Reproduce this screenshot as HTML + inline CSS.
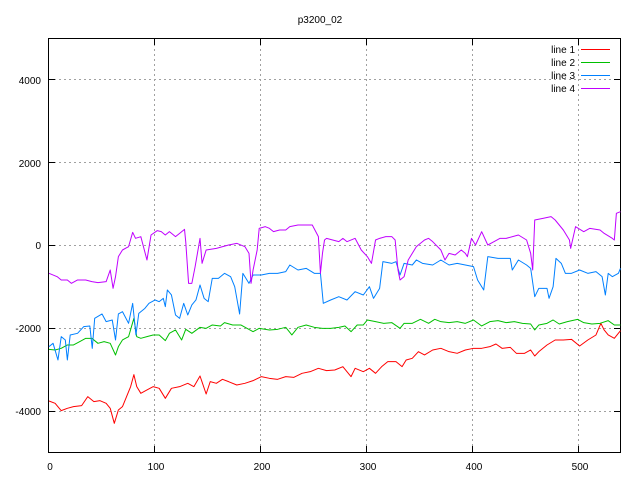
<!DOCTYPE html>
<html><head><meta charset="utf-8"><style>
html,body{margin:0;padding:0;background:#fff}
svg{display:block}
text{font-family:"Liberation Sans",sans-serif;font-size:10px;fill:#000}
</style></head><body>
<svg width="640" height="480" viewBox="0 0 640 480" xmlns="http://www.w3.org/2000/svg">
<g stroke="#a0a0a0" stroke-width="1" stroke-dasharray="2,3" fill="none" shape-rendering="crispEdges">
<line x1="154.5" y1="39" x2="154.5" y2="452"/><line x1="260.5" y1="39" x2="260.5" y2="452"/>
<line x1="366.5" y1="39" x2="366.5" y2="452"/><line x1="472.5" y1="39" x2="472.5" y2="452"/>
<line x1="578.5" y1="39" x2="578.5" y2="452"/>
<line x1="49" y1="79.5" x2="620" y2="79.5"/><line x1="49" y1="162.5" x2="620" y2="162.5"/>
<line x1="49" y1="245.5" x2="620" y2="245.5"/><line x1="49" y1="328.5" x2="620" y2="328.5"/>
<line x1="49" y1="411.5" x2="620" y2="411.5"/>
</g>
<g stroke="#000" stroke-width="1" fill="none" shape-rendering="crispEdges">
<rect x="48.5" y="38.5" width="572" height="414"/>
<path d="M49 79.5h6M49 162.5h6M49 245.5h6M49 328.5h6M49 411.5h6M620 79.5h-6M620 162.5h-6M620 245.5h-6M620 328.5h-6M620 411.5h-6M154.5 452v-6M260.5 452v-6M366.5 452v-6M472.5 452v-6M578.5 452v-6M154.5 39v6M260.5 39v6M366.5 39v6M472.5 39v6M578.5 39v6"/>
</g>
<text x="320" y="23" text-anchor="middle">p3200_02</text>
<g text-anchor="end">
<text x="41" y="84">4000</text><text x="41" y="167">2000</text><text x="41" y="249">0</text>
<text x="41" y="332">-2000</text><text x="41" y="415">-4000</text>
</g>
<g text-anchor="middle">
<text x="50" y="470">0</text><text x="156" y="470">100</text><text x="262" y="470">200</text>
<text x="368" y="470">300</text><text x="474" y="470">400</text><text x="580" y="470">500</text>
</g>
<g text-anchor="end" style="font-family:'Liberation Mono',monospace">
<text x="575" y="53">line 1</text><text x="575" y="66">line 2</text><text x="575" y="79">line 3</text><text x="575" y="92">line 4</text>
</g>
<rect x="581" y="49" width="29" height="1" fill="#ff0000"/>
<rect x="581" y="62" width="29" height="1" fill="#00c000"/>
<rect x="581" y="75" width="29" height="1" fill="#0080ff"/>
<rect x="581" y="88" width="29" height="1" fill="#c000ff"/>
<g transform="translate(0,240) scale(0.4082,0.3333)" fill="none" stroke-width="1" stroke-linejoin="round">
<polyline vector-effect="non-scaling-stroke" stroke="#ff0000" points="120,483 135,490 150,512 165,505 180,500 200,497 215,470 230,485 245,482 260,490 270,505 280,550 290,510 300,500 310,470 320,440 328,404 335,440 345,460 360,450 375,440 390,445 405,475 420,445 440,440 460,430 475,440 490,408 505,462 515,425 530,430 545,418 560,425 580,435 600,430 620,422 640,410 660,415 680,418 700,410 720,412 740,400 760,395 780,385 800,392 820,390 840,380 860,410 870,385 890,395 905,385 920,400 935,380 950,365 970,365 985,380 995,360 1010,355 1025,335 1040,345 1060,330 1080,325 1100,335 1120,340 1140,330 1160,325 1180,325 1200,320 1215,312 1230,325 1250,322 1265,340 1285,340 1300,330 1310,348 1320,335 1340,315 1360,300 1380,300 1400,298 1420,318 1440,300 1460,285 1472,250 1480,270 1490,285 1505,295 1520,272"/>
<polyline vector-effect="non-scaling-stroke" stroke="#00c000" points="120,328 135,330 150,325 165,315 180,315 195,305 210,295 225,295 240,310 255,305 270,310 283,345 290,320 300,300 315,290 328,235 335,290 345,295 360,290 375,285 390,285 405,302 415,280 430,270 445,300 455,268 470,280 490,262 505,265 520,255 540,258 550,248 570,255 590,255 605,265 620,275 635,265 660,270 680,268 700,262 715,285 730,262 750,255 770,262 790,265 810,265 830,262 845,258 860,275 875,255 890,255 900,240 920,245 940,250 960,248 980,265 990,250 1010,250 1030,238 1050,250 1065,238 1080,245 1100,248 1120,245 1140,250 1160,240 1180,258 1200,245 1220,242 1240,248 1260,245 1280,250 1300,252 1310,270 1320,255 1340,250 1355,240 1370,252 1390,245 1415,238 1430,248 1450,252 1470,250 1490,242 1505,255 1520,255"/>
<polyline vector-effect="non-scaling-stroke" stroke="#0080ff" points="120,320 130,310 142,360 150,290 160,300 165,360 172,285 190,280 205,260 220,258 226,325 232,235 250,222 260,245 275,240 283,300 290,222 300,215 315,250 325,190 333,285 340,220 355,205 365,190 380,180 390,185 400,175 405,200 410,150 420,165 430,225 440,235 450,190 460,225 470,195 480,180 490,135 500,175 510,185 520,115 535,115 550,100 565,110 575,140 587,222 595,100 610,130 620,105 640,105 660,100 680,100 700,95 710,75 730,90 750,85 770,100 785,100 792,190 810,180 830,170 850,180 870,155 890,165 905,140 915,175 930,145 938,65 960,70 970,65 980,105 990,70 1010,75 1020,60 1035,70 1060,75 1080,60 1100,75 1120,70 1140,75 1160,80 1170,120 1185,150 1195,50 1220,55 1250,55 1255,90 1270,60 1290,75 1300,85 1310,170 1320,145 1340,145 1345,175 1355,140 1362,55 1375,70 1385,100 1400,100 1420,90 1440,100 1460,95 1475,110 1483,165 1490,100 1500,110 1515,100 1520,85"/>
<polyline vector-effect="non-scaling-stroke" stroke="#c000ff" points="120,100 140,110 150,120 165,120 175,130 190,120 210,120 225,125 240,128 260,125 270,90 277,145 283,110 290,50 300,30 315,20 325,-23 332,-5 345,-10 360,60 368,0 370,-15 385,-28 395,-25 405,-15 415,-25 430,-10 440,-20 452,-32 455,5 462,130 470,130 478,80 490,-5 495,70 505,30 530,25 560,15 580,10 600,20 610,40 615,130 620,90 630,30 635,-35 650,-40 660,-35 670,-25 685,-30 700,-30 710,-40 730,-45 750,-45 765,-45 780,-10 785,100 790,40 795,0 800,-5 815,0 830,5 840,-5 850,5 870,-5 885,30 900,50 910,70 920,0 930,-5 945,-10 960,-10 968,0 975,90 980,120 990,110 1000,60 1020,20 1040,0 1050,-5 1060,5 1080,30 1090,60 1100,40 1115,45 1130,30 1140,40 1145,50 1155,-5 1165,15 1180,-25 1195,15 1210,5 1225,-5 1240,-5 1270,-15 1290,0 1300,40 1305,90 1310,-60 1330,-65 1350,-70 1360,-60 1380,-30 1395,0 1398,25 1410,-40 1430,-25 1445,-35 1470,-30 1480,-20 1500,-5 1505,0 1510,-80 1520,-85"/>
</g>
</svg>
</body></html>
